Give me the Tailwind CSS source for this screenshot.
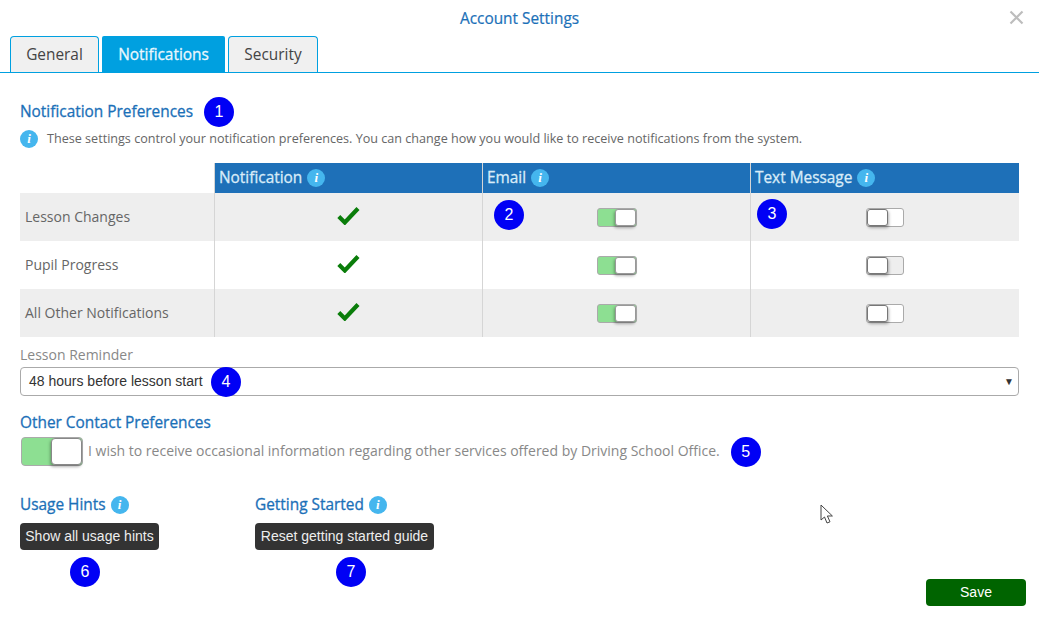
<!DOCTYPE html>
<html lang="en">

<head>
    <meta charset="UTF-8">
    <title>Account Settings</title>
    <script src="https://cdn.jsdelivr.net/npm/@tailwindcss/browser@4"></script>
</head>

<body class="bg-white font-['Open_Sans',sans-serif]">
    <div class="relative w-[1039px] h-[618px] overflow-hidden">
        <!-- title -->
        <div class="relative h-[36px] pt-[9px] text-center text-[15.4px] leading-[20px] text-[#1b70b8] [-webkit-text-stroke:0.2px]">
            Account Settings
            <svg class="absolute left-[1009px] top-[10px] w-[15px] h-[15px]" viewBox="0 0 15 15" fill="none" stroke="#bdbdbd" stroke-width="2.2">
                <path d="M1.5 1.5l12 12M13.5 1.5l-12 12" />
            </svg>
        </div>

        <!-- tabs -->
        <div class="flex h-[37px] pl-[10px] gap-[3px] border-b border-[#00a0e0]">
            <div class="w-[89px] h-[36px] pt-[1px] flex items-center justify-center bg-[#f0f0f0] border border-b-0 border-[#00a0e0] rounded-t-[4px] text-[15.4px] text-[#444]">General</div>
            <div class="w-[123px] h-[36px] pt-[1px] flex items-center justify-center bg-[#00a0e0] rounded-t-[2px] text-[15.4px] text-[#eaf7fd] [-webkit-text-stroke:0.3px]">Notifications</div>
            <div class="w-[90px] h-[36px] pt-[1px] flex items-center justify-center bg-[#f0f0f0] border border-b-0 border-[#00a0e0] rounded-t-[4px] text-[15.4px] text-[#444]">Security</div>
        </div>

        <div class="pl-[20px] w-[1019px]">
            <!-- heading -->
            <div class="flex items-center h-[30px] mt-[24px] gap-[11px]">
                <h2 class="pb-[1px] text-[15.4px] text-[#1b70b8] [-webkit-text-stroke:0.3px]">Notification Preferences</h2>
                <span class="w-[30px] h-[30px] rounded-full bg-[#0000f5] text-white text-[16px] flex items-center justify-center font-['Liberation_Sans',sans-serif]">1</span>
            </div>
            <div class="flex items-center h-[18px] mt-[3px] gap-[9px] text-[12.6px] text-[#666]">
                <span class="w-[18px] h-[18px] rounded-full bg-[#45b6ee] text-white text-[13px] font-bold italic flex items-center justify-center font-['Liberation_Serif',serif]">i</span>
                <span>These settings control your notification preferences. You can change how you would like to receive notifications from the system.</span>
            </div>

            <!-- table -->
            <div class="mt-[15px] grid grid-cols-[194px_268px_268px_269px] text-[#666] text-[14px]">
                <div class="h-[30px]"></div>
                <div class="h-[30px] pb-[1px] bg-[#1e70b8] border-l border-[#d5d5d5] flex items-center gap-[5px] pl-[4px] text-[15.4px] text-[#d9ecf8] [-webkit-text-stroke:0.3px]">Notification <span class="w-[18px] h-[18px] rounded-full bg-[#45b6ee] text-white text-[13px] font-bold italic flex items-center justify-center font-['Liberation_Serif',serif] [-webkit-text-stroke:0px]">i</span></div>
                <div class="h-[30px] pb-[1px] bg-[#1e70b8] border-l border-[#d5d5d5] flex items-center gap-[5px] pl-[4px] text-[15.4px] text-[#d9ecf8] [-webkit-text-stroke:0.3px]">Email <span class="w-[18px] h-[18px] rounded-full bg-[#45b6ee] text-white text-[13px] font-bold italic flex items-center justify-center font-['Liberation_Serif',serif] [-webkit-text-stroke:0px]">i</span></div>
                <div class="h-[30px] pb-[1px] bg-[#1e70b8] border-l border-[#d5d5d5] flex items-center gap-[5px] pl-[4px] text-[15.4px] text-[#d9ecf8] [-webkit-text-stroke:0.3px]">Text Message <span class="w-[18px] h-[18px] rounded-full bg-[#45b6ee] text-white text-[13px] font-bold italic flex items-center justify-center font-['Liberation_Serif',serif] [-webkit-text-stroke:0px]">i</span></div>

                <!-- Lesson Changes -->
                <div class="h-[48px] pb-[2px] bg-[#eeeeee] flex items-center pl-[5px]">Lesson Changes</div>
                <div class="h-[48px] pb-[3px] bg-[#eeeeee] border-l border-[#d5d5d5] flex items-center justify-center">
                    <svg class="w-[23px] h-[19px]" viewBox="0 0 23 19" fill="none" stroke="#0a7d0a" stroke-width="4.2"><path d="M1.8 10.5l6 6L21 2.5" /></svg>
                </div>
                <div class="relative h-[48px] bg-[#eeeeee] border-l border-[#d5d5d5] flex items-center justify-center pl-[1px]">
                    <span class="absolute left-[11px] top-[7px] w-[30px] h-[30px] rounded-full bg-[#0000f5] text-white text-[16px] flex items-center justify-center font-['Liberation_Sans',sans-serif]">2</span>
                    <div class="flex w-[40px] h-[19px] rounded-[3px] border border-[#aaa] bg-[#8ddf92] justify-end">
                        <div class="w-[21px] h-full bg-white rounded-[3px] border border-[#999] shadow-[-1px_2px_3px_rgba(0,0,0,0.3)]"></div>
                    </div>
                </div>
                <div class="relative h-[48px] bg-[#eeeeee] border-l border-[#d5d5d5] flex items-center justify-center">
                    <span class="absolute left-[6px] top-[6px] w-[30px] h-[30px] rounded-full bg-[#0000f5] text-white text-[16px] flex items-center justify-center font-['Liberation_Sans',sans-serif]">3</span>
                    <div class="flex w-[38px] h-[19px] rounded-[3px] border border-[#aaa] bg-white">
                        <div class="w-[21px] h-full bg-white rounded-[3px] border border-[#777] shadow-[1px_2px_3px_rgba(0,0,0,0.3)]"></div>
                    </div>
                </div>

                <!-- Pupil Progress -->
                <div class="h-[48px] pb-[2px] bg-white flex items-center pl-[5px]">Pupil Progress</div>
                <div class="h-[48px] pb-[3px] bg-white border-l border-[#d5d5d5] flex items-center justify-center">
                    <svg class="w-[23px] h-[19px]" viewBox="0 0 23 19" fill="none" stroke="#0a7d0a" stroke-width="4.2"><path d="M1.8 10.5l6 6L21 2.5" /></svg>
                </div>
                <div class="h-[48px] bg-white border-l border-[#d5d5d5] flex items-center justify-center pl-[1px]">
                    <div class="flex w-[40px] h-[19px] rounded-[3px] border border-[#aaa] bg-[#8ddf92] justify-end">
                        <div class="w-[21px] h-full bg-white rounded-[3px] border border-[#999] shadow-[-1px_2px_3px_rgba(0,0,0,0.3)]"></div>
                    </div>
                </div>
                <div class="h-[48px] bg-white border-l border-[#d5d5d5] flex items-center justify-center">
                    <div class="flex w-[38px] h-[19px] rounded-[3px] border border-[#aaa] bg-[#eeeeee]">
                        <div class="w-[21px] h-full bg-white rounded-[3px] border border-[#777] shadow-[1px_2px_3px_rgba(0,0,0,0.3)]"></div>
                    </div>
                </div>

                <!-- All Other Notifications -->
                <div class="h-[48px] pb-[2px] bg-[#eeeeee] flex items-center pl-[5px]">All Other Notifications</div>
                <div class="h-[48px] pb-[3px] bg-[#eeeeee] border-l border-[#d5d5d5] flex items-center justify-center">
                    <svg class="w-[23px] h-[19px]" viewBox="0 0 23 19" fill="none" stroke="#0a7d0a" stroke-width="4.2"><path d="M1.8 10.5l6 6L21 2.5" /></svg>
                </div>
                <div class="h-[48px] bg-[#eeeeee] border-l border-[#d5d5d5] flex items-center justify-center pl-[1px]">
                    <div class="flex w-[40px] h-[19px] rounded-[3px] border border-[#aaa] bg-[#8ddf92] justify-end">
                        <div class="w-[21px] h-full bg-white rounded-[3px] border border-[#999] shadow-[-1px_2px_3px_rgba(0,0,0,0.3)]"></div>
                    </div>
                </div>
                <div class="h-[48px] bg-[#eeeeee] border-l border-[#d5d5d5] flex items-center justify-center">
                    <div class="flex w-[38px] h-[19px] rounded-[3px] border border-[#aaa] bg-white">
                        <div class="w-[21px] h-full bg-white rounded-[3px] border border-[#777] shadow-[1px_2px_3px_rgba(0,0,0,0.3)]"></div>
                    </div>
                </div>
            </div>

            <!-- reminder -->
            <div class="mt-[9px] text-[14px] leading-[18px] text-[#888]">Lesson Reminder</div>
            <div class="relative mt-[3px] h-[29px] flex items-center justify-between border border-[#aaa] rounded-[4px] pl-[8px] pr-[4px] text-[14px] text-[#333] font-['Liberation_Sans',sans-serif]">
                <span>48 hours before lesson start</span>
                <span class="text-[10px] text-[#333]">&#9660;</span>
                <span class="absolute left-[190px] top-[-1px] w-[30px] h-[30px] rounded-full bg-[#0000f5] text-white text-[16px] flex items-center justify-center">4</span>
            </div>

            <h2 class="mt-[16px] pt-[1px] h-[20px] text-[15.4px] leading-[20px] text-[#1b70b8] [-webkit-text-stroke:0.3px]">Other Contact Preferences</h2>
            <div class="flex items-center mt-[4px] h-[30px] pl-[1px] text-[14px] text-[#888]">
                <div class="flex w-[62px] h-[29px] rounded-[4px] border border-[#aaa] bg-[#8ddf92] justify-end">
                    <div class="w-[31px] h-full bg-white rounded-[4px] border border-[#888] shadow-[-1px_2px_3px_rgba(0,0,0,0.3)]"></div>
                </div>
                <span class="ml-[5px] pb-[2px]">I wish to receive occasional information regarding other services offered by Driving School Office.</span>
                <span class="ml-[11px] mt-[1px] w-[30px] h-[30px] rounded-full bg-[#0000f5] text-white text-[16px] flex items-center justify-center font-['Liberation_Sans',sans-serif]">5</span>
            </div>

            <!-- hints -->
            <div class="flex mt-[29px]">
                <div class="w-[235px]">
                    <h2 class="flex items-center gap-[5px] h-[20px] text-[15.4px] text-[#1b70b8] [-webkit-text-stroke:0.3px]">Usage Hints <span class="w-[18px] h-[18px] rounded-full bg-[#45b6ee] text-white text-[13px] font-bold italic flex items-center justify-center font-['Liberation_Serif',serif] [-webkit-text-stroke:0px]">i</span></h2>
                    <button class="block mt-[8px] w-[139px] h-[27px] bg-[#333] rounded-[4px] text-[14px] text-[#eee] font-['Liberation_Sans',sans-serif]">Show all usage hints</button>
                    <span class="block mt-[7px] ml-[50px] w-[30px] h-[30px] rounded-full bg-[#0000f5] text-white text-[16px] leading-[30px] text-center font-['Liberation_Sans',sans-serif]">6</span>
                </div>
                <div>
                    <h2 class="flex items-center gap-[5px] h-[20px] text-[15.4px] text-[#1b70b8] [-webkit-text-stroke:0.3px]">Getting Started <span class="w-[18px] h-[18px] rounded-full bg-[#45b6ee] text-white text-[13px] font-bold italic flex items-center justify-center font-['Liberation_Serif',serif] [-webkit-text-stroke:0px]">i</span></h2>
                    <button class="block mt-[8px] w-[179px] h-[27px] bg-[#333] rounded-[4px] text-[14px] text-[#eee] font-['Liberation_Sans',sans-serif]">Reset getting started guide</button>
                    <span class="block mt-[7px] ml-[81px] w-[30px] h-[30px] rounded-full bg-[#0000f5] text-white text-[16px] leading-[30px] text-center font-['Liberation_Sans',sans-serif]">7</span>
                </div>
            </div>
        </div>

        <!-- mouse cursor -->
        <svg class="absolute left-[820px] top-[504px] w-[14px] h-[21px]" viewBox="0 0 14 21" fill="#fff" stroke="#444" stroke-width="1">
            <path d="M1 1v15l3.5-3 2.5 6 3-1.2-2.6-5.8H12.4z" />
        </svg>

        <button class="absolute left-[926px] top-[579px] w-[100px] h-[27px] bg-[#006400] rounded-[4px] text-[14px] text-white font-['Liberation_Sans',sans-serif]">Save</button>
    </div>
</body>

</html>
